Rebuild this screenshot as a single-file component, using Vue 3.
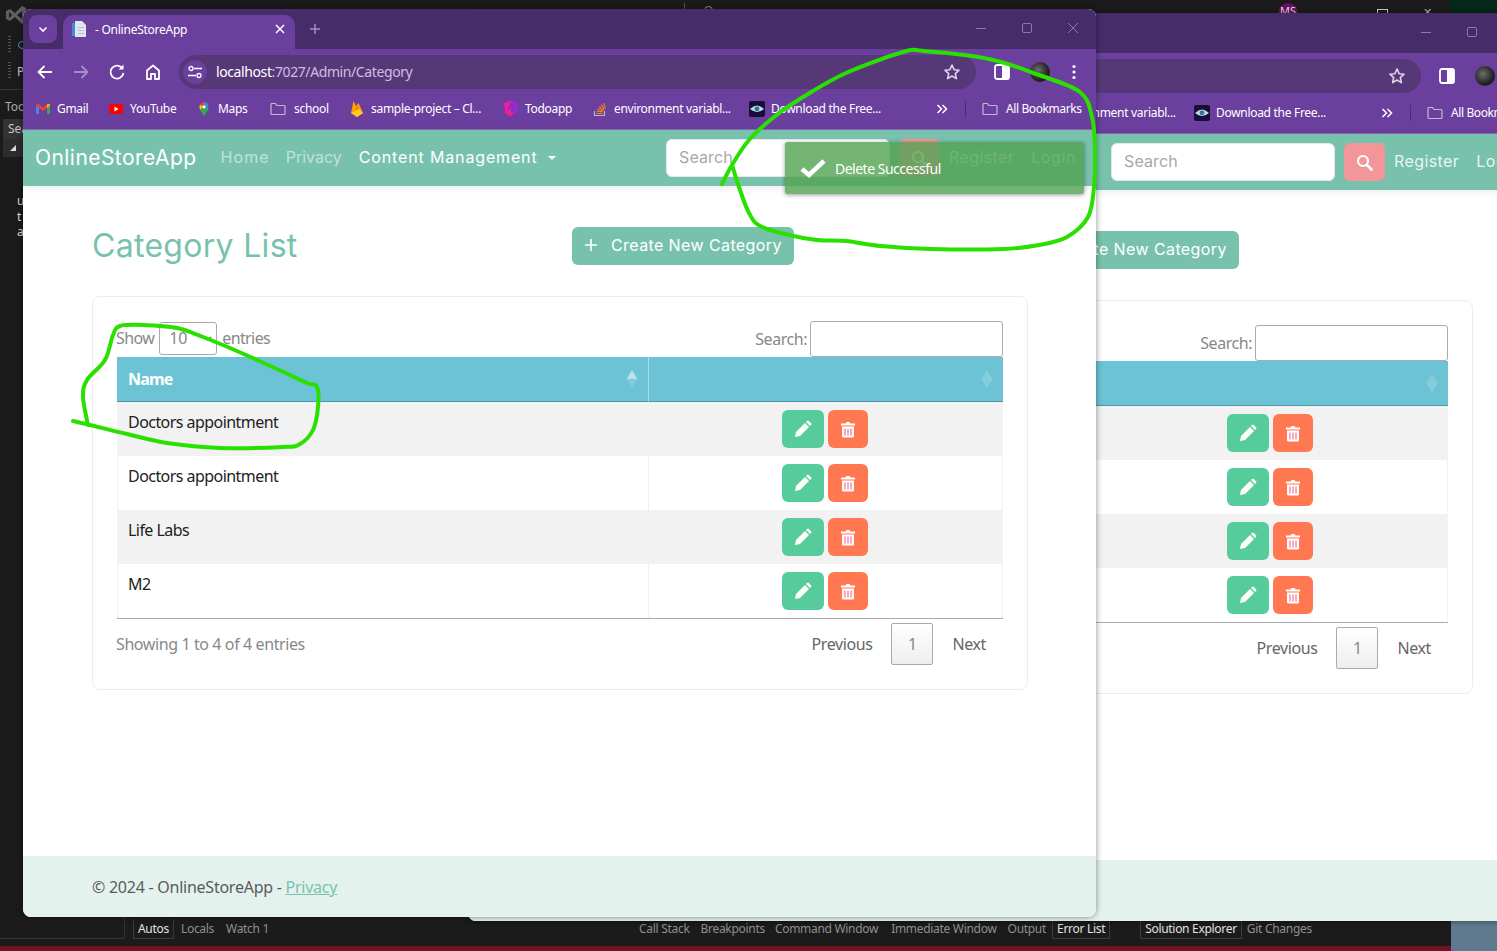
<template>
  <div class="desktop">
    <!-- visual studio behind the browsers -->
    <div class="vs">
      <div class="vs-top">
        <svg class="vs-logo" width="22" height="22" viewBox="0 0 22 22"><path fill="#5f5f5f" d="M1 7l4-2 5 4 7-7 4 2v14l-4 2-7-7-5 4-4-2zM4 8v6l3-3zM12 11l5 4V7z" fill-rule="evenodd"/></svg>
        <span class="vs-tick"></span>
        <span class="vs-o"></span>
        <span class="vs-ms">MS</span>
        <span class="vs-max"></span>
        <span class="vs-x">✕</span>
      </div>
      <div class="vs-body">
        <div class="vs-side">
          <div class="vs-grip"><i></i><b class="vs-dot"></b></div>
          <div class="vs-grip"><i></i><span>P</span></div>
          <div class="vs-panel">
            <div class="vs-panel-title">Too</div>
            <div class="vs-panel-search">Sea</div>
            <div class="vs-panel-tree"><span class="vs-tri"></span></div>
            <div class="vs-code">u<br>t<br>a</div>
          </div>
        </div>
      </div>
      <div class="vs-tabs">
        <span v-for="t in vsTabs" :key="t.name" class="vs-tab" :class="{ on: t.on }" :style="{ marginLeft: t.gap + 'px' }">{{ t.name }}</span>
      </div>
      <div class="vs-status"></div>
    </div>

    <!-- two browser windows, same page -->
    <div v-for="w in windows" :key="w.id" class="win" :style="{ left: w.x + 'px', top: w.y + 'px' }">
      <div class="tabstrip">
        <span class="tab-menu">
          <svg width="12" height="12" viewBox="0 0 12 12"><path d="M2.5 4.5 6 8l3.5-3.5" fill="none" stroke="#fff" stroke-width="1.6"/></svg>
        </span>
        <div class="tab">
          <svg width="16" height="16" viewBox="0 0 16 16"><path fill="#dfe6ef" d="M4 0h7l4 4v12H4z"/><path fill="#3f8fd0" d="M1 2h3v13H1z"/><path fill="#b8c0cc" d="M7 6h6v1H7zM7 9h6v1H7zM7 12h6v1H7z"/></svg>
          <span class="tab-title">- OnlineStoreApp</span>
          <svg class="tab-x" width="10" height="10" viewBox="0 0 10 10"><path d="M1 1l8 8M9 1 1 9" stroke="#fff" stroke-width="1.5"/></svg>
        </div>
        <svg class="tab-plus" width="12" height="12" viewBox="0 0 12 12"><path d="M6 1v10M1 6h10" stroke="#a48fc0" stroke-width="1.5"/></svg>
        <div class="win-btns">
          <svg width="12" height="12" viewBox="0 0 12 12"><path d="M1 6.500h10" stroke="#8d7ba6"/></svg>
          <svg width="12" height="12" viewBox="0 0 12 12"><rect x="1.500" y="1.500" width="9" height="9" rx="1.500" fill="none" stroke="#8d7ba6"/></svg>
          <svg width="12" height="12" viewBox="0 0 12 12"><path d="M1 1l10 10M11 1 1 11" stroke="#8d7ba6"/></svg>
        </div>
      </div>

      <div class="toolbar">
        <svg class="tb-ico" width="20" height="20" viewBox="0 0 20 20"><path d="M17 10H4M9.500 4 3.500 10l6 6" fill="none" stroke="#fff" stroke-width="1.800"/></svg>
        <svg class="tb-ico" width="20" height="20" viewBox="0 0 20 20"><path d="M3 10h13M10.500 4l6 6-6 6" fill="none" stroke="#a48fc0" stroke-width="1.800"/></svg>
        <svg class="tb-ico" width="20" height="20" viewBox="0 0 20 20"><path d="M15.500 6.500A6.500 6.500 0 1 0 16.500 11" fill="none" stroke="#fff" stroke-width="1.800"/><path d="M16.500 2.500v5h-5z" fill="#fff"/></svg>
        <svg class="tb-ico" width="20" height="20" viewBox="0 0 20 20"><path d="M4 17V8.500L10 3.500l6 5V17h-4v-5H8v5z" fill="none" stroke="#fff" stroke-width="1.800" stroke-linejoin="round"/></svg>
        <div class="omnibox">
          <span class="site-info">
            <svg width="16" height="14" viewBox="0 0 16 14"><circle cx="4" cy="3.500" r="2" fill="none" stroke="#fff" stroke-width="1.300"/><path d="M7 3.500h8M1 10.500h8" stroke="#fff" stroke-width="1.300"/><circle cx="12" cy="10.500" r="2" fill="none" stroke="#fff" stroke-width="1.300"/></svg>
          </span>
          <span class="url"><b>localhost</b>:7027/Admin/Category</span>
          <svg class="star" width="18" height="18" viewBox="0 0 18 18"><path d="M9 2l2.100 4.700 5 .5-3.800 3.400 1.100 5L9 13l-4.400 2.600 1.100-5L1.900 7.200l5-.5z" fill="none" stroke="#ddd5ea" stroke-width="1.600" stroke-linejoin="round"/></svg>
        </div>
        <svg class="side-ico" width="16" height="16" viewBox="0 0 16 16"><rect x="1" y="1" width="14" height="14" rx="2" fill="none" stroke="#fff" stroke-width="1.800"/><rect x="8" y="1" width="7" height="14" fill="#fff"/></svg>
        <span class="avatar"></span>
        <svg class="kebab" width="4" height="16" viewBox="0 0 4 16"><circle cx="2" cy="2.500" r="1.600" fill="#fff"/><circle cx="2" cy="8" r="1.600" fill="#fff"/><circle cx="2" cy="13.500" r="1.600" fill="#fff"/></svg>
      </div>

      <div class="bookmarks">
        <span v-for="b in bookmarks" :key="b.label" class="bm" :class="{ 'bm-folder': b.icon === 'folder' }" :style="{ width: b.w + 'px' }">
          <svg v-if="b.icon === 'gmail'" width="16" height="16" viewBox="0 0 16 16"><path fill="#4285f4" d="M1 4v9h3V7z"/><path fill="#34a853" d="M15 4v9h-3V7z"/><path fill="#ea4335" d="M4 7 1 3.500l2-1 5 4 5-4 2 1L12 7 8 10z"/><path fill="#fbbc04" d="M12 3.600 15 3v1.500L12 7z"/></svg>
          <svg v-if="b.icon === 'yt'" width="16" height="16" viewBox="0 0 16 16"><rect x="1" y="3" width="14" height="10" rx="3" fill="#f00"/><path d="M6.500 5.500v5l4-2.500z" fill="#fff"/></svg>
          <svg v-if="b.icon === 'maps'" width="16" height="16" viewBox="0 0 16 16"><path fill="#34a853" d="M8 15.500C6.500 12 3.500 10 3.500 6h9c0 4-3 6-4.500 9.500z"/><path fill="#ea4335" d="M4 3.500A5 5 0 0 1 8 1l1 3-3 2z"/><path fill="#4285f4" d="M8 1a4.700 4.700 0 0 1 4.500 4.500L9 6z"/><path fill="#fbbc04" d="M3.500 6q0-1.500.5-2.500L7 6l-3 3z"/><circle cx="8" cy="5.800" r="1.600" fill="#fff"/></svg>
          <svg v-if="b.icon === 'folder'" width="16" height="14" viewBox="0 0 16 14"><path d="M1 2.500C1 1.700 1.500 1.500 2 1.500h3.500l1.500 2h7c.6 0 1 .4 1 1v7c0 .6-.4 1-1 1H2c-.6 0-1-.4-1-1z" fill="none" stroke="#c4b8d6" stroke-width="1.200"/></svg>
          <svg v-if="b.icon === 'fire'" width="16" height="18" viewBox="0 0 16 18"><path fill="#ffa000" d="M2 13 4.500 1 7 6 9.500 3 14 13 8 17z"/><path fill="#f57c00" d="M8 5 10.500 10 8 17 5 14z"/><path fill="#ffca28" d="M2 13 10 9l4 4-6 4z"/></svg>
          <svg v-if="b.icon === 'ng'" width="16" height="18" viewBox="0 0 16 18"><path fill="#e91ea0" d="M8 .5 1 3l1 10L8 17z"/><path fill="#9c27d0" d="M8 .5 15 3l-1 10L8 17z"/><path d="M8 3 4.500 10h1.600L8 6 9.900 10h1.600z" fill="#6b3f9e"/><path d="M5 12h6l-3 3z" fill="#f0266f"/></svg>
          <svg v-if="b.icon === 'so'" width="16" height="16" viewBox="0 0 16 16"><path d="M2.500 10v4.500h10V10" fill="none" stroke="#bcbbbb" stroke-width="1.200"/><path d="M4.500 12.500h6M4.700 10.200l5.800.8M5.500 8l5.400 2.300M7 5.700l4.600 3.600M9 3.800l3.500 4.600M11.500 2l2 5.400" stroke="#f48024" stroke-width="1.200"/></svg>
          <svg v-if="b.icon === 'eye'" width="16" height="16" viewBox="0 0 16 16"><rect width="16" height="16" rx="2" fill="#1a0d3a"/><path d="M1 8q7-7 14 0-7 6-14 0z" fill="#b9dcec"/><circle cx="8" cy="7.800" r="2.400" fill="#3b6f96"/></svg>
          <span v-if="b.label" class="bm-text">{{ b.label }}</span>
        </span>
        <svg class="chev" width="12" height="12" viewBox="0 0 12 12"><path d="M1.500 2 5.500 6l-4 4M6.500 2l4 4-4 4" fill="none" stroke="#fff" stroke-width="1.500"/></svg>
        <span class="bm-sep"></span>
        <span class="bm bm-folder bm-all">
          <svg width="16" height="14" viewBox="0 0 16 14"><path d="M1 2.500C1 1.700 1.500 1.500 2 1.500h3.500l1.500 2h7c.6 0 1 .4 1 1v7c0 .6-.4 1-1 1H2c-.6 0-1-.4-1-1z" fill="none" stroke="#c4b8d6" stroke-width="1.200"/></svg>
          <span class="bm-text">All Bookmarks</span>
        </span>
      </div>

      <nav class="navbar">
        <a class="brand">OnlineStoreApp</a>
        <div class="nav-links">
          <a class="nav-link">Home</a>
          <a class="nav-link">Privacy</a>
          <a class="nav-link active">Content Management<i class="caret"></i></a>
        </div>
        <div class="nav-right">
          <input class="nav-search" placeholder="Search" />
          <button class="nav-btn">
            <svg width="17" height="17" viewBox="0 0 17 17"><circle cx="7" cy="7" r="5" fill="none" stroke="#fff" stroke-width="2.200"/><path d="M10.800 10.800 15.500 15.500" stroke="#fff" stroke-width="2.600" stroke-linecap="round"/></svg>
          </button>
          <a class="nav-auth">Register</a>
          <a class="nav-auth">Login</a>
        </div>
      </nav>

      <main class="main">
        <div class="title-row">
          <h1 class="title">Category List</h1>
          <button class="create-btn">
            <svg width="14" height="14" viewBox="0 0 14 14"><path d="M7 1v12M1 7h12" stroke="#fff" stroke-width="1.600"/></svg>
            <span>Create New Category</span>
          </button>
        </div>

        <section class="card">
          <div class="dt-controls">
            <label class="dt-length">Show
              <span class="dt-select">
                <select><option>10</option></select>
                <svg width="8" height="6" viewBox="0 0 8 6"><path d="M1 1l3 3 3-3" fill="none" stroke="#666" stroke-width="1.300"/></svg>
              </span>
              entries</label>
            <label class="dt-search">Search:<input /></label>
          </div>
          <table class="table">
            <thead>
              <tr>
                <th class="col-name">Name
                  <svg class="sort" width="12" height="18" viewBox="0 0 12 18"><path d="M6 0l5.500 9H.5z" fill="#fff" fill-opacity=".5"/><path d="M6 18l5.500-9H.5z" fill="#fff" fill-opacity=".15"/></svg>
                </th>
                <th class="col-act">
                  <svg class="sort" width="12" height="18" viewBox="0 0 12 18"><path d="M6 0l5.500 9H.5z" fill="#fff" fill-opacity=".18"/><path d="M6 18l5.500-9H.5z" fill="#fff" fill-opacity=".18"/></svg>
                </th>
              </tr>
            </thead>
            <tbody>
              <tr v-for="(c, i) in categories" :key="i">
                <td>{{ c }}</td>
                <td class="actions">
                  <button class="btn-edit">
                    <svg width="18" height="18" viewBox="0 0 18 18"><path d="M1 17l1-5L11 3l4 4-9 9z" fill="#fff"/><path d="M12 2l1-1c.6-.5 1.200-.5 1.800 0l2.200 2.200c.5.600.5 1.200 0 1.800l-1 1z" fill="#fff"/></svg>
                  </button>
                  <button class="btn-del">
                    <svg width="16" height="17" viewBox="0 0 16 17"><path d="M1 2.500h4.500L6.500 1h3l1 1.500H15V4.500H1z" fill="#fff"/><path d="M2 5.500h12V15a1.500 1.500 0 0 1-1.500 1.500h-9A1.500 1.500 0 0 1 2 15z" fill="#fff"/><path d="M5 7.500v7M8 7.500v7M11 7.500v7" stroke="#f7638e" stroke-width="1.100"/></svg>
                  </button>
                </td>
              </tr>
            </tbody>
          </table>
          <div class="dt-footer">
            <span class="dt-info">Showing 1 to 4 of 4 entries</span>
            <div class="pager">
              <a>Previous</a>
              <span class="page-cur">1</span>
              <a>Next</a>
            </div>
          </div>
        </section>
      </main>

      <footer class="foot">© 2024 - OnlineStoreApp - <a>Privacy</a></footer>

      <div v-if="w.toast" class="toast">
        <svg width="26" height="20" viewBox="0 0 26 20"><path d="M2 11l7 6L24 3" fill="none" stroke="#fff" stroke-width="4.500"/></svg>
        <span>Delete Successful</span>
      </div>
    </div>

    <!-- hand drawn marks on the screenshot -->
    <svg class="scribble" width="1497" height="951" viewBox="0 0 1497 951">
      <path v-for="(d, i) in scribbles" :key="i" :d="d" fill="none" stroke="#29e000" stroke-width="4" stroke-linecap="round" stroke-linejoin="round" />
    </svg>
  </div>
</template>

<script setup>
const windows = [
  { id: 'back', x: 468, y: 13, toast: false },
  { id: 'front', x: 23, y: 9, toast: true },
]

const bookmarks = [
  { icon: 'gmail', label: 'Gmail', w: 73 },
  { icon: 'yt', label: 'YouTube', w: 88 },
  { icon: 'maps', label: 'Maps', w: 74 },
  { icon: 'folder', label: 'school', w: 79 },
  { icon: 'fire', label: 'sample-project – Cl...', w: 154 },
  { icon: 'ng', label: 'Todoapp', w: 89 },
  { icon: 'so', label: 'environment variabl...', w: 157 },
  { icon: 'eye', label: 'Download the Free...', w: 187 },
]

const categories = ['Doctors appointment', 'Doctors appointment', 'Life Labs', 'M2']

const vsTabs = [
  { name: 'Autos', gap: 133, on: true },
  { name: 'Locals', gap: 3 },
  { name: 'Watch 1', gap: 4 },
  { name: 'Call Stack', gap: 362 },
  { name: 'Breakpoints', gap: 3 },
  { name: 'Command Window', gap: 2 },
  { name: 'Immediate Window', gap: 5 },
  { name: 'Output', gap: 3 },
  { name: 'Error List', gap: 2, on: true },
  { name: 'Solution Explorer', gap: 30, on: true },
  { name: 'Git Changes', gap: 1 },
]

const marks = [
  [[722, 184], [732, 165], [749, 140], [774, 117], [803, 97], [846, 73], [903, 52], [924, 51], [989, 59], [1039, 75], [1080, 92], [1092, 117], [1095, 150], [1094, 187], [1088, 217], [1067, 237], [1039, 245], [1003, 249], [931, 249], [881, 246], [846, 241], [817, 240], [789, 235], [760, 226], [749, 213], [740, 190], [732, 165]],
  [[73, 421], [90, 425], [127, 434], [167, 443], [220, 448], [283, 447], [300, 444], [313, 430], [318, 407], [317, 387], [307, 383], [277, 369], [230, 348], [203, 337], [177, 328], [143, 325], [120, 326], [113, 335], [105, 360], [87, 380], [83, 397], [88, 425]],
]

// catmull-rom through the points so the marks look drawn by hand
function smooth(pts) {
  let d = `M${pts[0][0]} ${pts[0][1]}`
  for (let i = 0; i < pts.length - 1; i++) {
    const p0 = pts[i - 1] || pts[i]
    const p1 = pts[i]
    const p2 = pts[i + 1]
    const p3 = pts[i + 2] || p2
    const c1x = p1[0] + (p2[0] - p0[0]) / 6
    const c1y = p1[1] + (p2[1] - p0[1]) / 6
    const c2x = p2[0] - (p3[0] - p1[0]) / 6
    const c2y = p2[1] - (p3[1] - p1[1]) / 6
    d += ` C${c1x} ${c1y} ${c2x} ${c2y} ${p2[0]} ${p2[1]}`
  }
  return d
}

const scribbles = marks.map(smooth)
</script>

<style>
html, body {
  margin: 0;
  background: #1b1b1b;
  overflow: hidden;
}
</style>

<style scoped>
.desktop {
  position: relative;
  width: 1497px;
  height: 951px;
  overflow: hidden;
  background: linear-gradient(#04281a 0, #04281a 250px, #5f7a8f 900px);
  font-family: "Noto Sans", sans-serif;
}

/* visual studio */
.vs {
  display: flex;
  flex-direction: column;
  width: 1451px;
  height: 951px;
  border-top-right-radius: 8px;
  background: #1b1b1b;
  color: #c8c8c8;
}
.vs-top {
  position: relative;
  height: 32px;
  flex: none;
}
.vs-logo {
  position: absolute;
  left: 5px;
  top: 4px;
}
.vs-tick {
  position: absolute;
  left: 684px;
  top: 3px;
  width: 1px;
  height: 7px;
  background: #555;
}
.vs-o {
  position: absolute;
  left: 704px;
  top: 6px;
  width: 7px;
  height: 7px;
  border: 1px solid #999;
  border-radius: 50%;
}
.vs-ms {
  position: absolute;
  left: 1278px;
  top: 3px;
  width: 20px;
  height: 20px;
  border-radius: 50%;
  background: #6a0f66;
  color: #ddd;
  font-size: 11px;
  text-align: center;
}
.vs-max {
  position: absolute;
  left: 1377px;
  top: 9px;
  width: 9px;
  height: 9px;
  border: 1px solid #ccc;
}
.vs-x {
  position: absolute;
  left: 1423px;
  top: 4px;
  font-size: 11px;
  color: #bbb;
}
.vs-body {
  flex: 1;
  display: flex;
  min-height: 0;
}
.vs-side {
  width: 125px;
  flex: none;
}
.vs-grip {
  display: flex;
  align-items: center;
  gap: 6px;
  height: 26px;
  padding-left: 8px;
  font-size: 12px;
}
.vs-grip i {
  width: 3px;
  height: 18px;
  background: repeating-linear-gradient(#555 0 1px, transparent 1px 3px);
}
.vs-dot {
  width: 6px;
  height: 6px;
  margin-left: 1px;
  border: 1px solid #3a96dd;
  border-radius: 50%;
}
.vs-panel {
  margin-top: 5px;
  height: 850px;
  border: 1px solid #333;
  border-left: 0;
  font-size: 12px;
  padding-top: 8px;
  box-sizing: border-box;
}
.vs-panel-title {
  padding-left: 5px;
  height: 21px;
  color: #aaa;
}
.vs-panel-search {
  margin-left: 3px;
  height: 20px;
  line-height: 20px;
  padding-left: 5px;
  background: #333;
}
.vs-panel-tree {
  display: flex;
  align-items: center;
  height: 18px;
  margin: 0 0 0 3px;
  padding-left: 7px;
  background: #2d2d2d;
}
.vs-tri {
  width: 0;
  height: 0;
  border-left: 6px solid transparent;
  border-bottom: 6px solid #ddd;
}
.vs-code {
  margin-top: 36px;
  padding-left: 17px;
  line-height: 15.500px;
  color: #ddd;
}
.vs-tabs {
  display: flex;
  align-items: flex-start;
  flex: none;
  height: 20px;
  font-size: 12px;
  color: #8f8f8f;
}
.vs-tab {
  padding: 0 4px;
  height: 20px;
  line-height: 20px;
  box-sizing: border-box;
  white-space: nowrap;
  letter-spacing: -0.3px;
}
.vs-tab.on {
  color: #e2e2e2;
  border: 1px solid #3c3c3c;
  border-top: 0;
}
.vs-status {
  flex: none;
  height: 5px;
  margin-top: 7px;
  background: #6f1426;
}

/* browser window */
.win {
  position: absolute;
  display: flex;
  flex-direction: column;
  width: 1073px;
  height: 908px;
  overflow: hidden;
  border-radius: 8px;
  background: #fff;
  box-shadow: 0 0 6px rgba(0, 0, 0, 0.45);
}
.tabstrip {
  display: flex;
  align-items: flex-end;
  flex: none;
  height: 40px;
  background: #472c6a;
}
.tab-menu {
  display: flex;
  align-items: center;
  justify-content: center;
  width: 28px;
  height: 28px;
  margin: 0 6px 6px 6px;
  border-radius: 8px;
  background: #6b3f9e;
}
.tab {
  display: flex;
  align-items: center;
  width: 232px;
  height: 34px;
  padding: 0 10px 6px 8px;
  box-sizing: border-box;
  background: #6b3f9e;
  border-radius: 10px 10px 0 0;
  color: #fff;
  font-size: 12px;
  letter-spacing: -0.25px;
}
.tab-title {
  margin-left: 8px;
  flex: 1;
}
.tab-plus {
  margin: 0 0 14px 14px;
}
.win-btns {
  display: flex;
  gap: 34px;
  margin: 0 17px 15px auto;
}
.toolbar {
  display: flex;
  align-items: center;
  flex: none;
  height: 40px;
  padding: 6px 0 0 12px;
  box-sizing: border-box;
  background: #6b3f9e;
}
.tb-ico {
  margin-right: 16px;
}
.omnibox {
  display: flex;
  align-items: center;
  width: 797px;
  height: 34px;
  border-radius: 17px;
  background: #563878;
  box-sizing: border-box;
  padding: 0 15px 0 4px;
}
.site-info {
  display: flex;
  align-items: center;
  justify-content: center;
  width: 24px;
  height: 24px;
  border-radius: 50%;
  background: #6b3f9e;
}
.url {
  margin-left: 9px;
  padding-bottom: 2px;
  flex: 1;
  color: #cdbfe0;
  font-size: 14px;
  letter-spacing: -0.4px;
}
.url b {
  color: #fff;
  font-weight: 400;
}
.side-ico {
  margin-left: 18px;
}
.avatar {
  width: 20px;
  height: 20px;
  margin-left: 20px;
  border-radius: 50%;
  background: radial-gradient(circle at 40% 40%, #6d6d6d, #222 60%, #111);
}
.kebab {
  margin-left: 22px;
}
.bookmarks {
  display: flex;
  align-items: center;
  flex: none;
  height: 41px;
  padding-left: 12px;
  box-sizing: border-box;
  background: #6b3f9e;
  border-bottom: 1px solid #8a6ab3;
}
.bm {
  display: flex;
  align-items: center;
  gap: 6px;
  flex: none;
  white-space: nowrap;
  color: #fff;
  font-size: 12px;
  letter-spacing: -0.3px;
}
.bm-folder {
  gap: 8px;
}
.bm-all {
  margin-left: -1px;
  letter-spacing: -0.4px;
}
.bm-text {
  line-height: 16px;
}
.bm-sep {
  width: 1px;
  height: 16px;
  margin: 0 17px;
  background: #4b2c74;
}

/* site */
.navbar {
  display: flex;
  align-items: center;
  flex: none;
  height: 56px;
  padding: 0 0 0 12px;
  background: #78c2ad;
  box-shadow: 0 2px 8px rgba(0, 0, 0, 0.08);
  font-family: Inter, sans-serif;
}
.brand {
  padding-bottom: 2px;
  color: #fff;
  font-size: 21px;
  letter-spacing: 0.44px;
  white-space: nowrap;
}
.nav-links {
  display: flex;
  gap: 16px;
  margin-left: 24px;
}
.nav-link {
  padding-bottom: 2px;
  color: rgba(255, 255, 255, 0.55);
  font-size: 16px;
  white-space: nowrap;
  letter-spacing: 1.1px;
}
.nav-link:nth-child(2) {
  letter-spacing: 0;
}
.nav-link.active {
  margin-left: 1px;
  color: #fff;
  letter-spacing: 0.85px;
}
.caret {
  display: inline-block;
  margin-left: 10px;
  vertical-align: 3px;
  border-top: 4px solid #fff;
  border-left: 4px solid transparent;
  border-right: 4px solid transparent;
}
.nav-right {
  display: flex;
  align-items: center;
  margin-left: auto;
  padding-right: 20px;
}
.nav-search {
  width: 224px;
  height: 38px;
  box-sizing: border-box;
  padding: 0 12px 2px;
  border: 1px solid #e6e6e6;
  border-radius: 6px;
  background: #fff;
  font: 16px Inter, sans-serif;
  letter-spacing: 0.1px;
  outline: none;
}
.nav-search::placeholder {
  color: #a8a8a8;
}
.nav-btn {
  display: flex;
  align-items: center;
  justify-content: center;
  width: 41px;
  height: 38px;
  margin-left: 9px;
  padding: 0;
  border: 0;
  border-radius: 6px;
  background: #f3969a;
}
.nav-auth {
  margin-left: 9px;
  padding-bottom: 2px;
  color: rgba(255, 255, 255, 0.85);
  font-size: 16px;
  letter-spacing: 0.4px;
}
.nav-auth + .nav-auth {
  margin-left: 17px;
  letter-spacing: 0.6px;
}
.main {
  flex: 1;
  min-height: 0;
  padding: 41px 68px 0 69px;
}
.title-row {
  display: flex;
  align-items: center;
  height: 38px;
}
.title {
  width: 480px;
  margin: 0;
  padding-bottom: 2px;
  color: #78c2ad;
  font: 400 32px Inter, sans-serif;
  letter-spacing: 0.3px;
}
.create-btn {
  display: flex;
  align-items: center;
  gap: 13px;
  width: 222px;
  height: 38px;
  padding: 0 0 2px 12px;
  box-sizing: border-box;
  border: 0;
  border-radius: 6px;
  background: #78c2ad;
  color: #fff;
  font: 16px Inter, sans-serif;
  letter-spacing: 0.4px;
  white-space: nowrap;
}
.card {
  height: 394px;
  margin-top: 31px;
  padding: 24px 24px 0;
  box-sizing: border-box;
  border: 1px solid #ededed;
  border-radius: 8px;
}
.dt-controls {
  display: flex;
  justify-content: space-between;
  height: 36px;
  color: #888;
  font-size: 16px;
  letter-spacing: -0.6px;
}
.dt-length {
  display: flex;
  align-items: center;
  gap: 5px;
  height: 34px;
  margin-left: -1px;
}
.dt-select {
  position: relative;
  display: block;
  width: 58px;
  height: 33px;
}
.dt-select select {
  width: 100%;
  height: 100%;
  padding: 0 0 0 9px;
  box-sizing: border-box;
  appearance: none;
  border: 1px solid #aaa;
  border-radius: 3px;
  background: #fff;
  color: #888;
  font: 16px "Noto Sans", sans-serif;
}
.dt-select svg {
  position: absolute;
  right: 5px;
  top: 14px;
}
.dt-search {
  display: flex;
  align-items: center;
  gap: 3px;
  letter-spacing: -0.45px;
}
.dt-search input {
  width: 193px;
  height: 36px;
  box-sizing: border-box;
  border: 1px solid #aaa;
  border-radius: 3px;
  outline: none;
}
.table {
  width: 886px;
  table-layout: fixed;
  border-collapse: separate;
  border-spacing: 0;
  border-bottom: 1px solid #aaa;
  color: #212121;
  font-size: 16px;
  letter-spacing: -0.55px;
}
.table th {
  position: relative;
  height: 45px;
  padding: 0 11px;
  box-sizing: border-box;
  background: #6cc3d5;
  border-bottom: 1px solid #4c95a5;
  color: #fff;
  font-weight: 700;
  letter-spacing: -0.8px;
  text-align: left;
}
.col-name {
  width: 532px;
  border-right: 1px solid #a4dbe6;
}
.sort {
  position: absolute;
  right: 10px;
  top: 13px;
}
.table td {
  height: 54px;
  padding: 8px 11px;
  box-sizing: border-box;
  vertical-align: top;
  line-height: 24px;
}
.table td:first-child {
  padding-left: 10px;
  border-left: 1px solid #f2f2f2;
  border-right: 1px solid #f0f0f0;
}
.table td:last-child {
  border-right: 1px solid #f2f2f2;
}
.table tbody tr:nth-child(odd) td {
  background: #f2f2f2;
}
.table td.actions {
  padding: 8px 2px 8px 0;
  text-align: center;
}
.actions button {
  display: inline-flex;
  align-items: center;
  justify-content: center;
  height: 38px;
  padding: 0;
  border: 0;
  border-radius: 6px;
  vertical-align: top;
}
.btn-edit {
  width: 42px;
  margin-right: 4px;
  background: #56cc9d;
}
.btn-del {
  width: 40px;
  background: #ff7851;
}
.dt-footer {
  display: flex;
  justify-content: space-between;
  color: #888;
  font-size: 16px;
  letter-spacing: -0.4px;
}
.dt-info {
  margin: 14px 0 0 -1px;
}
.pager {
  display: flex;
  align-items: center;
  gap: 19px;
  height: 42px;
  margin: 4px 17px 0 0;
  color: #666;
}
.page-cur {
  display: flex;
  align-items: center;
  justify-content: center;
  width: 42px;
  height: 42px;
  box-sizing: border-box;
  border: 1px solid #aaa;
  border-radius: 2px;
  background: linear-gradient(#fff, #eee);
  color: #888;
}
.foot {
  flex: none;
  height: 61px;
  padding-left: 69px;
  background: #e4f2ee;
  color: #5a5a5a;
  font-size: 16px;
  letter-spacing: -0.25px;
  line-height: 62px;
}
.foot a {
  color: #78c2ad;
  text-decoration: underline;
}
.toast {
  position: absolute;
  left: 762px;
  top: 133px;
  display: flex;
  align-items: center;
  gap: 9px;
  width: 299px;
  height: 52px;
  padding: 0 0 0 15px;
  box-sizing: border-box;
  background: rgba(81, 163, 81, 0.8);
  border-radius: 2px;
  box-shadow: 0 1px 4px rgba(0, 0, 0, 0.4);
  color: #fff;
  font-size: 14px;
  letter-spacing: -0.5px;
}
.scribble {
  position: absolute;
  left: 0;
  top: 0;
  pointer-events: none;
}
</style>
